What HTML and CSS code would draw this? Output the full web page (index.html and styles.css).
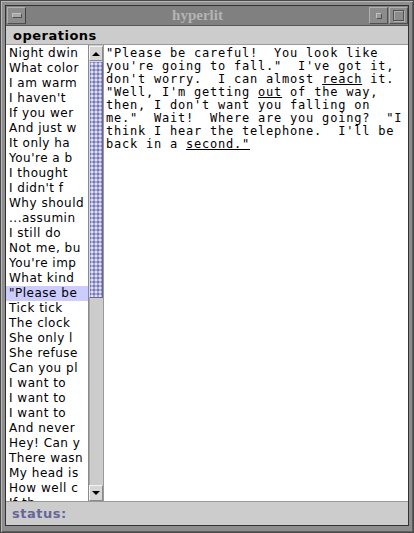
FILE: index.html
```html
<!DOCTYPE html>
<html>
<head>
<meta charset="utf-8">
<link rel="stylesheet" href="styles.css">
</head>
<body>
<div class="window">
  <div class="frame">
    <div class="titlebar">
      <div class="tbtn tbtn-menu"><span class="bar"></span></div>
      <div class="title">hyperlit</div>
      <div class="tbtn tbtn-min"><span class="dot"></span></div>
      <div class="tbtn tbtn-max"><span class="box"></span></div>
    </div>
    <div class="menubar"><span class="menu">operations</span></div>
    <div class="body">
      <ul class="list">
        <li>Night dwin</li>
        <li>What color</li>
        <li>I am warm</li>
        <li>I haven't</li>
        <li>If you wer</li>
        <li>And just w</li>
        <li>It only ha</li>
        <li>You're a b</li>
        <li>I thought</li>
        <li>I didn't f</li>
        <li>Why should</li>
        <li>...assumin</li>
        <li>I still do</li>
        <li>Not me, bu</li>
        <li>You're imp</li>
        <li>What kind</li>
        <li class="selected">"Please be</li>
        <li>Tick tick</li>
        <li>The clock</li>
        <li>She only l</li>
        <li>She refuse</li>
        <li>Can you pl</li>
        <li>I want to</li>
        <li>I want to</li>
        <li>I want to</li>
        <li>And never</li>
        <li>Hey! Can y</li>
        <li>There wasn</li>
        <li>My head is</li>
        <li>How well c</li>
        <li>If th</li>
      </ul>
      <div class="scrollbar">
        <div class="arrow arrow-up"><span class="tri-up"></span></div>
        <div class="thumb"></div>
        <div class="track"></div>
        <div class="arrow arrow-down"><span class="tri-down"></span></div>
      </div>
      <pre class="text">"Please be careful!  You look like
you're going to fall."  I've got it,
don't worry.  I can almost <u>reach</u> it.
"Well, I'm getting <u>out</u> of the way,
then, I don't want you falling on
me."  Wait!  Where are you going?  "I
think I hear the telephone.  I'll be
back in a <u>second."</u></pre>
    </div>
    <div class="statusbar"><span class="status">status:</span></div>
  </div>
</div>
</body>
</html>
```
FILE: styles.css
```css
html, body {
  margin: 0;
  padding: 0;
  background: #8c8c8c;
}
.window {
  width: 414px;
  height: 533px;
  box-sizing: border-box;
  border: 1px solid #4a4a4a;
  background: #8e8e8e;
  box-shadow: inset 1px 1px 0 #b8b8b8, inset -1px -1px 0 #5c5c5c;
  padding: 4px 4px 6px 4px;
}
.frame {
  height: 100%;
  box-sizing: border-box;
  border: 1px solid #333;
  display: flex;
  flex-direction: column;
  background: #cccccc;
}
.titlebar {
  height: 19px;
  flex: none;
  display: flex;
  align-items: center;
  background: #808080;
  border-bottom: 1px solid #555;
}
.tbtn {
  width: 19px;
  height: 17px;
  box-sizing: border-box;
  background: #8c8c8c;
  border-top: 1px solid #b0b0b0;
  border-left: 1px solid #b0b0b0;
  border-right: 1px solid #505050;
  border-bottom: 1px solid #505050;
  display: flex;
  align-items: center;
  justify-content: center;
  flex: none;
}
.tbtn-menu {
  margin-left: 1px;
  border-right: 1px solid #404040;
}
.tbtn-menu .bar {
  width: 8px;
  height: 3px;
  background: #a8a8a8;
  border: 1px solid #505050;
  border-top-color: #c0c0c0;
  border-left-color: #c0c0c0;
}
.tbtn-min {
  margin-right: 1px;
}
.tbtn-min .dot {
  width: 4px;
  height: 4px;
  background: #9a9a9a;
  border: 1px solid #505050;
  border-top-color: #c0c0c0;
  border-left-color: #c0c0c0;
}
.tbtn-max .box {
  width: 9px;
  height: 9px;
  border: 1px solid #505050;
  box-shadow: 1px 1px 0 #b0b0b0, inset 1px 1px 0 #b0b0b0;
}
.title {
  flex: 1;
  text-align: center;
  font-family: "Liberation Serif", serif;
  font-weight: bold;
  font-size: 15px;
  color: #b4b4b4;
  line-height: 17px;
}
.menubar {
  height: 18px;
  flex: none;
  background: #cccccc;
  border-bottom: 1px solid #9a9a9a;
  display: flex;
  align-items: center;
  padding-left: 7px;
}
.menu {
  font-family: "DejaVu Sans", sans-serif;
  font-weight: bold;
  font-size: 13px;
  letter-spacing: 0.5px;
  color: #000;
}
.body {
  height: 456px;
  flex: none;
  display: flex;
  background: #fff;
  overflow: hidden;
}
.list {
  list-style: none;
  margin: 0;
  padding: 1px 0 0 0;
  width: 82px;
  flex: none;
  background: #fff;
  overflow: hidden;
}
.list li {
  height: 15px;
  line-height: 15px;
  padding-left: 3px;
  white-space: nowrap;
  overflow: hidden;
  font-family: "DejaVu Sans", sans-serif;
  font-size: 12px;
  letter-spacing: 0.5px;
  color: #000;
}
.list li.selected {
  background: #ccccff;
}
.scrollbar {
  width: 16px;
  flex: none;
  box-sizing: border-box;
  border-left: 1px solid #8a8a8a;
  border-right: 1px solid #9a9a9a;
  display: flex;
  flex-direction: column;
  background: #cccccc;
}
.arrow {
  height: 15px;
  flex: none;
  box-sizing: border-box;
  background: #d6d6d6;
  border-top: 1px solid #f4f4f4;
  border-left: 1px solid #f4f4f4;
  border-right: 1px solid #8a8a8a;
  border-bottom: 1px solid #8a8a8a;
  display: flex;
  align-items: center;
  justify-content: center;
}
.arrow-up {
  margin-top: 1px;
}
.arrow-down {
  height: 16px;
}
.tri-up {
  width: 0;
  height: 0;
  border-left: 4px solid transparent;
  border-right: 4px solid transparent;
  border-bottom: 4px solid #000;
}
.tri-down {
  width: 0;
  height: 0;
  border-left: 4px solid transparent;
  border-right: 4px solid transparent;
  border-top: 4px solid #000;
}
.thumb {
  height: 237px;
  flex: none;
  box-sizing: border-box;
  border-left: 1px solid #d8d8ff;
  border-top: 1px solid #d8d8ff;
  border-right: 1px solid #666699;
  border-bottom: 1px solid #666699;
  background-color: #aaaadd;
  background-image: radial-gradient(circle, #e0e0ff 0.7px, transparent 1px), radial-gradient(circle, #7777aa 0.7px, transparent 1px);
  background-size: 4px 4px, 4px 4px;
  background-position: 0 0, 2px 2px;
}
.track {
  flex: 1;
  background: #cccccc;
  border-left: 1px solid #a8a8a8;
}
.text {
  flex: 1;
  margin: 0;
  padding: 2px 0 0 2px;
  background: #fff;
  font-family: "DejaVu Sans Mono", monospace;
  font-size: 12px;
  letter-spacing: 0.78px;
  line-height: 13px;
  color: #000;
  white-space: pre;
  overflow: hidden;
}
.text u {
  text-underline-offset: 1px;
}
.statusbar {
  flex: 1;
  background: #cccccc;
  border-top: 1px solid #9a9a9a;
  display: flex;
  align-items: center;
  padding-left: 6px;
}
.status {
  font-family: "DejaVu Sans", sans-serif;
  font-weight: bold;
  font-size: 13px;
  letter-spacing: 0.5px;
  color: #666699;
}
```
